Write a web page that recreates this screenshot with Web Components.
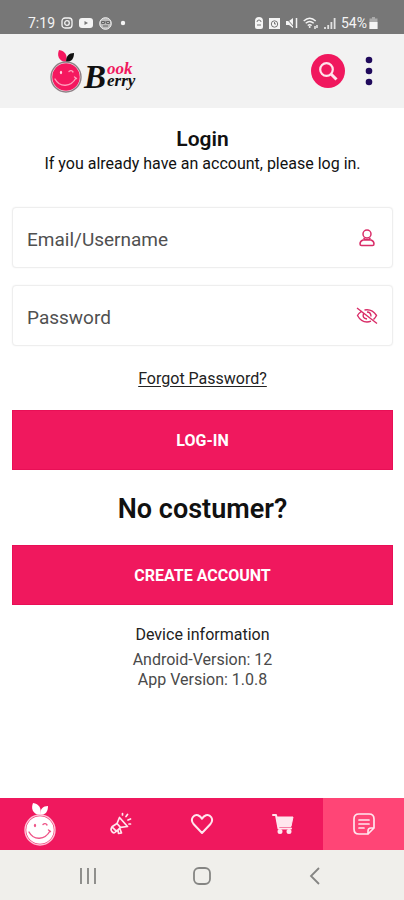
<!DOCTYPE html>
<html lang="en">
<head>
<meta charset="utf-8">
<meta name="viewport" content="width=device-width, initial-scale=1">
<title>Book Berry – Login</title>
<style>
  body { margin: 0; background: #fff; color: #111; font-family: Roboto, "Liberation Sans", sans-serif; }
</style>
</head>
<body>
<berry-app></berry-app>

<script>
const define = (name, html, setup) => {
  const template = document.createElement('template');
  template.innerHTML = html;
  customElements.define(name, class extends HTMLElement {
    constructor() {
      super();
      this.attachShadow({ mode: 'open' }).append(template.content.cloneNode(true));
    }
    connectedCallback() { if (setup) setup(this, this.shadowRoot); }
  });
};

/* Smiling berry, coloured through custom properties */
define('berry-mark', `
<style>
  :host { display: block; width: 32px; }
  svg { display: block; width: 100%; }
</style>
<svg viewBox="0 0 32 44" aria-hidden="true">
  <path d="M16 13C8 12 7 6 9 1c6 1 9 5 7 12z" fill="var(--berry,#f5185f)"/>
  <path d="M16 13c0-6 3-9 8-9 0 5-2 9-8 9z" fill="var(--leaf,#111)"/>
  <circle cx="16" cy="28" r="15" fill="none" stroke="var(--ring,#8d7e84)" stroke-width="1.4"/>
  <circle cx="16" cy="28" r="13.8" fill="var(--berry,#f5185f)"/>
  <g fill="none" stroke="var(--face,#ff9dbb)" stroke-width="1.4" stroke-linecap="round">
    <path d="M5 30c5 9 16 8 21-1M24.500 28l2 1.500M19 22.500c1.500-1.500 3-1 4 .5"/>
  </g>
  <ellipse cx="11" cy="23.500" rx="1.100" ry="1.800" fill="var(--face,#ffd3e0)"/>
</svg>`);

define('status-bar', `
<style>
  :host { display: flex; align-items: center; justify-content: space-between; box-sizing: border-box;
    height: 34px; padding: 12px 25px 0 28px; background: #777; color: #f4f4f4; font-size: 14px; line-height: 20px; }
  div { display: flex; align-items: center; gap: 6px; }
  .right { gap: 5px; }
  .battery { display: flex; align-items: center; gap: 1px; }
  svg { display: block; fill: none; stroke: currentColor; }
</style>
<div>
  <span>7:19</span>
  <svg width="12" height="12" viewBox="0 0 12 12" stroke-width="1.300"><rect x="1" y="1" width="10" height="10" rx="3"/><circle cx="6" cy="6" r="2.300"/><path d="M8.800 3.200h.4"/></svg>
  <svg width="14" height="10" viewBox="0 0 14 10"><rect width="14" height="10" rx="3" fill="currentColor" stroke="none"/><path d="M5.500 3v4L9 5z" fill="#777" stroke="none"/></svg>
  <svg width="13" height="13" viewBox="0 0 13 13"><circle cx="6.500" cy="6.500" r="5.800" fill="#bbb"/><path d="M2.500 4.500h3v2h-3zM7.500 4.500h3v2h-3zM4 9h5M5.500 5h2" stroke="#666"/></svg>
  <svg width="8" height="6" viewBox="0 0 8 6"><circle cx="5" cy="3" r="2.200" fill="currentColor" stroke="none"/></svg>
</div>
<div class="right">
  <svg width="10" height="12" viewBox="0 0 10 12"><path d="M1 4a4 4 0 0 1 8 0v6q0 2-2 2H3q-2 0-2-2z" fill="currentColor" stroke="none"/><path d="M3 5a2 2 0 0 1 4 0M3 8h4" stroke="#777"/></svg>
  <svg width="11" height="11" viewBox="0 0 11 11"><path d="M0 0h11v11H0z" fill="currentColor" stroke="none"/><circle cx="5.500" cy="6" r="3.200" stroke="#777"/><path d="M5.500 4v2h1.500" stroke="#777"/></svg>
  <svg width="13" height="12" viewBox="0 0 13 12"><path d="M1 4h3l4-3v10L4 8H1z" fill="currentColor" stroke="none"/><path d="M1 1l9 10" stroke="#777"/><path d="M11.500 1v10" stroke-width="1.500"/></svg>
  <svg width="16" height="12" viewBox="0 0 16 12" stroke-width="1.400"><path d="M.7 4q6-5.500 12 0M2.700 6.300q4-3.500 8 0M4.700 8.500q2-1.500 4 0M12 9v3M14 8v3"/><circle cx="6.700" cy="10" r="1" fill="currentColor" stroke="none"/></svg>
  <svg width="12" height="11" viewBox="0 0 12 11" stroke-width="1.800"><path d="M1 11V9M4.200 11V7M7.400 11V4M10.600 11V0" opacity=".85"/></svg>
  <span class="battery"><span>54%</span>
  <svg width="11" height="12" viewBox="0 0 11 12"><path d="M4 0h3v1.500h2.500V12h-8V1.500H4z" fill="#aaa" stroke="none"/><path d="M1.500 5h8v7h-8z" fill="currentColor" stroke="none"/></svg></span>
</div>`);

define('app-header', `
<style>
  :host { display: flex; align-items: center; justify-content: space-between; box-sizing: border-box;
    height: 74px; padding: 0 23px 0 50px; background: #f2f2f2; }
  a { display: flex; align-items: center; color: #111; text-decoration: none; }
  berry-mark { width: 32px; }
  .word { display: block; width: 56px; height: 44px; overflow: visible;
    font-family: "Liberation Serif", serif; font-style: italic; font-weight: bold; }
  .tools { display: flex; align-items: center; gap: 12px; }
  button { display: grid; place-items: center; padding: 0; border: 0; background: none; cursor: pointer; }
  .search { width: 34px; height: 34px; border-radius: 50%; background: #f0185e; }
  .menu { width: 24px; height: 34px; }
</style>
<a href="#home" aria-label="Book Berry">
  <berry-mark></berry-mark>
  <svg class="word" viewBox="0 0 56 44">
    <text x="2" y="39" font-size="33" fill="#111">B</text>
    <text x="25" y="25" font-size="17" fill="#f0185e">ook</text>
    <text x="25" y="37" font-size="17" fill="#111">erry</text>
  </svg>
</a>
<div class="tools">
  <button class="search" aria-label="Search"><svg width="20" height="20" viewBox="0 0 20 20" fill="none" stroke="#ffe3ec" stroke-width="2.200"><circle cx="8.500" cy="8.500" r="6.300"/><path d="M13 13l5.500 5.500" stroke-width="3"/></svg></button>
  <button class="menu" aria-label="Menu"><svg width="8" height="30" viewBox="0 0 8 30" fill="#200a5c"><circle cx="4" cy="4" r="3.300"/><circle cx="4" cy="15" r="3.300"/><circle cx="4" cy="26" r="3.300"/></svg></button>
</div>`);

define('form-field', `
<style>
  :host { display: block; }
  label { display: flex; align-items: center; box-sizing: border-box; height: 61px; padding: 0 14px;
    border: 1px solid #eee; border-radius: 4px; background: #fff; box-shadow: 0 0 2px #f1f1f1; }
  input { flex: 1; min-width: 0; padding: 4px 0 0; border: 0; outline: 0; background: none;
    font: 19px/24px Roboto, "Liberation Sans", sans-serif; color: #333; }
  input::placeholder { color: #505050; opacity: 1; }
  ::slotted(svg) { display: block; flex: none; }
</style>
<label><input><slot></slot></label>`, (host, root) => {
  const input = root.querySelector('input');
  input.type = host.getAttribute('type');
  input.placeholder = host.getAttribute('label');
  input.setAttribute('aria-label', host.getAttribute('label'));
});

define('action-button', `
<style>
  :host { display: block; }
  button { display: block; width: 100%; height: 60px; padding: 2px 0 0; border: 1px solid #e80f56; background: #f0185e;
    color: #fff; font: 700 16px/20px Roboto, "Liberation Sans", sans-serif; cursor: pointer; }
</style>
<button><slot></slot></button>`);

define('login-panel', `
<style>
  :host { display: flex; flex-direction: column; padding: 18px 11px 18px 12px; text-align: center; font-size: 16px; line-height: 20px; }
  h1, h2, p { margin: 0; }
  h1 { margin-bottom: 2px; font-size: 21px; line-height: 26px; font-weight: 600; }
  h2 { margin: 21px 0 18px; font-size: 27px; line-height: 36px; font-weight: 600; }
  .fields { display: grid; gap: 17px; margin: 33px 0 23px; }
  .forgot { align-self: center; margin-bottom: 21px; color: #222; text-underline-offset: 2px; }
  .device { margin: 20px 0 5px; color: #222; }
  .detail { color: #4a4a4a; }
</style>
<h1>Login</h1>
<p>If you already have an account, please log in.</p>
<div class="fields">
  <form-field type="text" label="Email/Username">
    <svg width="22" height="20" viewBox="0 0 22 20" fill="none" stroke="#d92d68" stroke-width="1.500"><circle cx="11" cy="6" r="4"/><path d="M7.500 10l2 1.500h3l2-1.500M7 12h8q3 1 3 4 0 1.500-1.500 1.500h-11Q4 17.500 4 16q0-3 3-4z"/></svg>
  </form-field>
  <form-field type="password" label="Password">
    <svg width="22" height="20" viewBox="0 0 22 20" fill="none" stroke="#d92d68" stroke-width="1.400"><path d="M1 2l20 15.500M6 5Q3 7 1.500 9.500 5 16 11 16q2 0 4-.8M8.500 4q7.500-1.500 12 5.500-1 2-3 4M7.500 7.500q-1.500 5 3.500 5.500M11 6q4 0 4 4.500"/></svg>
  </form-field>
</div>
<a class="forgot" href="#forgot">Forgot Password?</a>
<action-button>LOG-IN</action-button>
<h2>No costumer?</h2>
<action-button>CREATE ACCOUNT</action-button>
<p class="device">Device information</p>
<p class="detail">Android-Version: 12</p>
<p class="detail">App Version: 1.0.8</p>`);

define('tab-bar', `
<style>
  :host { display: block; background: #f0185e; }
  nav { display: grid; grid-template-columns: repeat(5, 1fr); height: 52px; }
  a { display: grid; place-items: center; color: #ffe6ee; }
  a[aria-current] { background: #ff4576; }
  svg { display: block; fill: none; stroke: currentColor; stroke-width: 2; stroke-linecap: round; stroke-linejoin: round; }
  berry-mark { --berry: #fff; --leaf: #fff; --ring: #ffc4d8; --face: #ee5588; }
</style>
<nav aria-label="Main">
  <a href="#home" aria-label="Home"><berry-mark></berry-mark></a>
  <a href="#news" aria-label="News"><svg width="22" height="24" viewBox="0 0 22 24" style="stroke-width:1.700"><path d="M9.500 5.500l8 9-7 .8-4 4-4.500-4.500L7 11.500zM7 11.500l3.500 3.800M2 15q-2 3 .3 5T6 19l2-1 .5 3.500 3-.5-1.500-4M12.500 3V1.500M16 4.500l1.500-2M18 8l2.500-1M19 12h1.500"/></svg></a>
  <a href="#wishlist" aria-label="Wishlist"><svg width="24" height="22" viewBox="0 0 24 22"><path d="M12 20L3.500 11C-.5 6 4 1 8 2.300c2 .7 3.200 2 4 3.400.8-1.400 2-2.700 4-3.400 4-1.300 8.500 3.700 4.500 8.700z"/></svg></a>
  <a href="#cart" aria-label="Cart"><svg width="22" height="22" viewBox="0 0 22 22"><path d="M1 2h3l2.500 13.500H19" /><path d="M5 4h16l-2 9.500H6.500z" fill="currentColor" stroke-width="1"/><circle cx="8" cy="18.500" r="1.500" fill="currentColor"/><circle cx="17" cy="18.500" r="1.500" fill="currentColor"/></svg></a>
  <a href="#account" aria-label="Account" aria-current="page"><svg width="22" height="24" viewBox="0 0 22 24" style="stroke-width:1.700"><path d="M15 22H6q-5 0-5-5V7q0-5 5-5h10q5 0 5 5v9l-6 6v-3q0-3 3-3h3M6 8h10M6 12h10M6 16h5"/></svg></a>
</nav>`);

define('system-bar', `
<style>
  :host { display: flex; justify-content: center; align-items: center; gap: 90px; height: 50px; background: #f0efeb; }
  button { display: grid; place-items: center; width: 24px; height: 30px; padding: 2px 0 0; border: 0; background: none; }
  svg { display: block; fill: none; stroke: #858583; stroke-width: 1.800; }
</style>
<button aria-label="Recent apps"><svg width="18" height="18" viewBox="0 0 18 18"><path d="M2 1v16M9 1v16M16 1v16"/></svg></button>
<button aria-label="Home screen"><svg width="18" height="18" viewBox="0 0 18 18"><rect x="1" y="1" width="16" height="16" rx="5"/></svg></button>
<button aria-label="Back"><svg width="18" height="18" viewBox="0 0 18 18"><path d="M12 1L4 9l8 8"/></svg></button>`);

define('berry-app', `
<style>
  :host { display: flex; flex-direction: column; min-height: 100vh; }
  main { flex: 1; }
</style>
<status-bar></status-bar>
<app-header></app-header>
<main><login-panel></login-panel></main>
<tab-bar></tab-bar>
<system-bar></system-bar>`);
</script>
</body>
</html>
